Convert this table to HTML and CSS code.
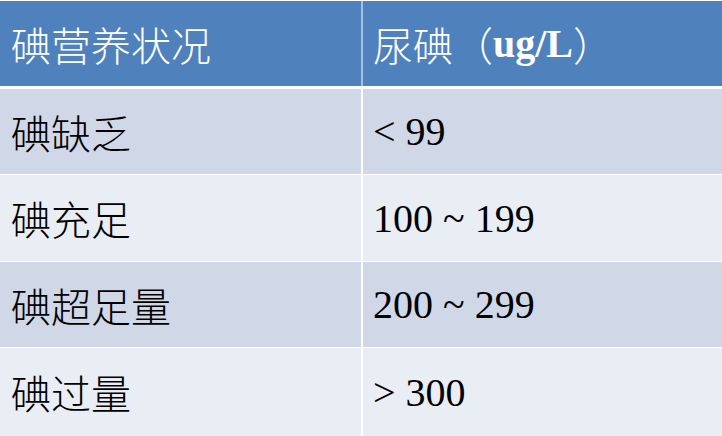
FILE: index.html
```html
<!DOCTYPE html>
<html lang="zh-CN">
<head>
<meta charset="utf-8">
<title>碘营养状况</title>
<link rel="stylesheet" href="styles.css">
</head>
<body>
<div class="table">
  <div class="row head">
    <div class="cell">碘营养状况</div>
    <div class="cell">尿碘（<b class="unit">ug/L</b>）</div>
  </div>
  <div class="row odd">
    <div class="cell">碘缺乏</div>
    <div class="cell">&lt; 99</div>
  </div>
  <div class="row even">
    <div class="cell">碘充足</div>
    <div class="cell">100 ~ 199</div>
  </div>
  <div class="row odd">
    <div class="cell">碘超足量</div>
    <div class="cell">200 ~ 299</div>
  </div>
  <div class="row even last">
    <div class="cell">碘过量</div>
    <div class="cell">&gt; 300</div>
  </div>
</div>
</body>
</html>
```
FILE: styles.css
```css
html, body {
  margin: 0;
  padding: 0;
  background: #ffffff;
}
body {
  width: 722px;
  height: 436px;
  overflow: hidden;
  font-family: "Liberation Serif", "Noto Sans CJK SC", serif;
  font-size: 40px;
  color: #000;
}
.table {
  display: flex;
  flex-direction: column;
  gap: 1px;
  padding-top: 1px;
  background: #ffffff;
}
.row {
  display: grid;
  grid-template-columns: 361px 1fr;
  column-gap: 2px;
  height: 85px;
  background: #ffffff;
}
.row.even { height: 86px; }
.row.last { height: 88px; }
.head {
  background: #a9bfdf;
  margin-bottom: 2px;
}
.cell {
  display: flex;
  align-items: center;
  padding-left: 11px;
  white-space: nowrap;
  font-weight: 300;
}
.row .cell + .cell { padding-left: 10px; }
.head .cell {
  background: #4f81bd;
  color: #ffffff;
}
.odd .cell { background: #d0d8e8; }
.even .cell { background: #e9edf4; }
.unit { font-weight: bold; }
```
